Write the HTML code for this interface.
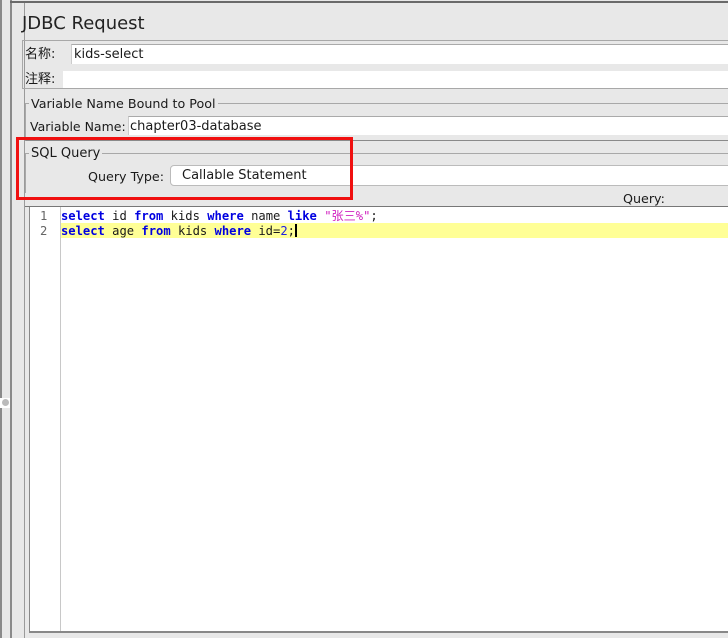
<!DOCTYPE html>
<html><head><meta charset="utf-8"><style>
*{margin:0;padding:0;box-sizing:border-box}
body{width:728px;height:638px;background:#e8e8e8;position:relative;overflow:hidden;font-family:"Lucida Grande","DejaVu Sans","Liberation Sans","Noto Sans CJK SC",sans-serif;font-size:13px;color:#1a1a1a}
.a{position:absolute}
.t{font-size:13px;white-space:nowrap;line-height:16px;height:16px}
.mono{font-family:"DejaVu Sans Mono","Liberation Mono","Noto Sans CJK SC",monospace;font-size:12.15px;white-space:pre}
.k{color:#0000e0;font-weight:bold}
</style></head><body>
<div class="a" style="left:0;top:0;width:2px;height:638px;background:#8a8a8a"></div>
<div class="a" style="left:10px;top:0;width:2px;height:638px;background:#8a8a8a"></div>
<div class="a" style="left:24px;top:1px;width:1px;height:637px;background:#9a9a9a"></div>
<div class="a" style="left:10px;top:1px;width:718px;height:2px;background:#6a6a6a"></div>
<div class="a" style="left:0;top:398px;width:10px;height:10px;background:#fff"></div>
<div class="a" style="left:2px;top:399px;width:7px;height:7px;border-radius:50%;background:#bbb"></div>

<div class="a" style="left:22px;top:13px;font-size:18px;line-height:22px;color:#222">JDBC Request</div>

<div class="a" style="left:22px;top:40px;width:710px;height:49px;border:1px solid #a8a8a8"></div>
<div class="a t" style="left:25px;top:47px">名称:</div>
<div class="a" style="left:71px;top:44px;width:660px;height:20px;background:#fff;border-top:1px solid #aaa;border-left:1px solid #ccc"></div>
<div class="a t" style="left:74px;top:47px">kids-select</div>
<div class="a t" style="left:25px;top:72px">注释:</div>
<div class="a" style="left:63px;top:71px;width:670px;height:17px;background:#fff"></div>

<div class="a" style="left:25px;top:103px;width:710px;height:38px;border:1px solid #a8a8a8;border-bottom:1px solid #8a8a8a"></div>
<div class="a t" style="left:29px;top:96px;background:#e8e8e8;padding:0 2px;font-size:12.7px">Variable Name Bound to Pool</div>
<div class="a t" style="left:30px;top:119px;font-size:12.5px">Variable Name:</div>
<div class="a" style="left:128px;top:116px;width:610px;height:19px;background:#fff;border-top:1px solid #aaa;border-left:1px solid #ccc"></div>
<div class="a t" style="left:130px;top:119px">chapter03-database</div>

<div class="a" style="left:25px;top:153px;width:710px;height:40px;border:1px solid #a8a8a8;border-bottom:none"></div>
<div class="a t" style="left:29px;top:146px;background:#e8e8e8;padding:0 2px">SQL Query</div>
<div class="a t" style="left:88px;top:169px;font-size:12.7px">Query Type:</div>
<div class="a" style="left:170px;top:165px;width:570px;height:21px;background:#fff;border:1px solid #bbb;border-radius:4px"></div>
<div class="a t" style="left:182px;top:168px">Callable Statement</div>
<div class="a" style="left:25px;top:206px;width:703px;height:1px;background:#777"></div>
<div class="a t" style="left:623px;top:191px;font-size:12.7px">Query:</div>

<div class="a" style="left:16px;top:137px;width:337px;height:63px;border:3px solid #f01010"></div>

<div class="a" style="left:29px;top:207px;width:700px;height:426px;background:#fff;border-left:1px solid #888;border-bottom:2px solid #888"></div>
<div class="a" style="left:60px;top:207px;width:1px;height:424px;background:#c8c8c8"></div>
<div class="a" style="left:61px;top:223px;width:667px;height:15px;background:#ffff96"></div>
<div class="a mono" style="left:40px;top:209px;color:#666;line-height:15px">1
2</div>
<div class="a mono" style="left:61px;top:209px;line-height:15px"><span class="k">select</span> id <span class="k">from</span> kids <span class="k">where</span> name <span class="k">like</span> <span style="color:#d020c0">"张三%"</span>;
<span class="k">select</span> age <span class="k">from</span> kids <span class="k">where</span> id=<span style="color:#2020e0">2</span>;<span style="display:inline-block;width:2px;height:13px;background:#000;vertical-align:-2px"></span></div>
</body></html>
